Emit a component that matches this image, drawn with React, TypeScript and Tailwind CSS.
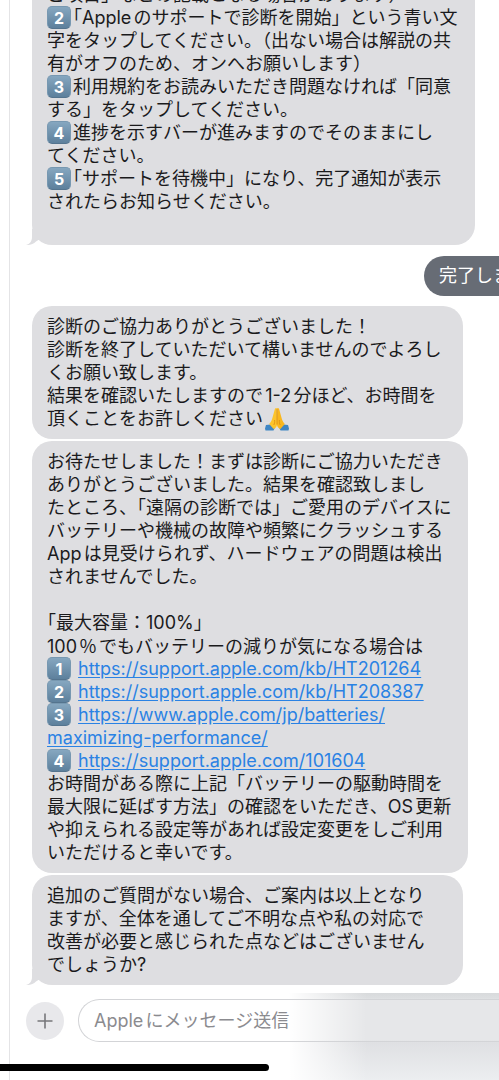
import type { ReactNode } from 'react'

const Key = ({ n }: { n: number }) => (
    <span className="inline-flex h-[23px] w-6 mr-0.5 items-center justify-center rounded-[5px] border border-[#7798b1] border-b-[#54748e] bg-linear-to-b from-[#86a7c0] to-[#5d809c] align-top font-[Inter,sans-serif] text-base font-bold text-white">
        {n}
    </span>
)

// half-width bracket, for places where a full-width one leaves too much room
const Half = ({ children }: { children: ReactNode }) => (
    <span className="[font-feature-settings:'halt']">{children}</span>
)

const Link = ({ href, children }: { href: string; children: ReactNode }) => (
    <a href={href} className="text-[#2a82e4] underline underline-offset-2">{children}</a>
)

const Pray = () => (
    <svg viewBox="0 0 24 24" className="ml-0.5 inline-block h-6 w-6 align-top" role="img" aria-label="お願い">
        <path d="M0 21.5 L1 18 L5.5 17.5 L10 20.5 L8.5 23.5 H.5 Z" fill="#3f86c4" />
        <path d="M24 21.5 L23 18 L18.5 17.5 L14 20.5 L15.5 23.5 H23.5 Z" fill="#3f86c4" />
        <path d="M11.8 1.2 C10.6 .6 9.9 1.6 9.6 3 L7.4 11 C6.9 13 6 15 4.2 17 L8.6 22 C10.6 21 12 19.5 12 17.5 Z" fill="#fcc42c" />
        <path d="M12.2 1.2 C13.4 .6 14.1 1.6 14.4 3 L16.6 11 C17.1 13 18 15 19.8 17 L15.4 22 C13.4 21 12 19.5 12 17.5 Z" fill="#f9b71e" />
        <path d="M12 2 V17.5 M9.6 13 C9.8 15 9.6 16.5 8.8 18 M14.4 13 C14.2 15 14.4 16.5 15.2 18" fill="none" stroke="#d98a12" strokeWidth=".8" />
    </svg>
)

const Tail = () => (
    <svg viewBox="0 0 14 16" className="absolute bottom-0 -left-1.5 h-4 w-3.5" aria-hidden="true">
        <path d="M6 0 V8 C6 12 4 15 0 16 C4 16.4 8 15 10 12.5 L14 10 V0 Z" fill="#dedee1" />
    </svg>
)

type BubbleProps = { lines: ReactNode[]; tail?: boolean; className: string }

const Bubble = ({ lines, tail, className }: BubbleProps) => (
    <div className={`relative rounded-[20px] bg-[#dedee1] py-[9px] pl-[15px] text-lg leading-[23px] whitespace-nowrap ${className}`}>
        {lines.map((line, i) => (
            <p key={i} className="h-[23px]">{line}</p>
        ))}
        {tail && <Tail />}
    </div>
)

const steps = [
    'ご項目」などの記載となる場合があります）',
    <><Key n={2} /><Half>「</Half>Appleのサポートで診断を開始」という青い文</>,
    '字をタップしてください。（出ない場合は解説の共',
    '有がオフのため、オンへお願いします）',
    <><Key n={3} />利用規約をお読みいただき問題なければ「同意</>,
    'する」をタップしてください。',
    <><Key n={4} />進捗を示すバーが進みますのでそのままにし</>,
    'てください。',
    <><Key n={5} /><Half>「</Half>サポートを待機中」になり、完了通知が表示</>,
    'されたらお知らせください。',
    '',
]

const thanks = [
    '診断のご協力ありがとうございました！',
    '診断を終了していただいて構いませんのでよろし',
    'くお願い致します。',
    '結果を確認いたしますので1-2分ほど、お時間を',
    <>頂くことをお許しください<Pray /></>,
]

const result = [
    'お待たせしました！まずは診断にご協力いただき',
    'ありがとうございました。結果を確認致しまし',
    'たところ、「遠隔の診断では」ご愛用のデバイスに',
    'バッテリーや機械の故障や頻繁にクラッシュする',
    'Appは見受けられず、ハードウェアの問題は検出',
    'されませんでした。',
    '',
    <><Half>「</Half>最大容量：100%<Half>」</Half></>,
    <>100<span className="mx-0.5 font-['Noto_Sans_CJK_JP',sans-serif]">％</span>でもバッテリーの減りが気になる場合は</>,
    <><Key n={1} /> <Link href="https://support.apple.com/kb/HT201264">https://support.apple.com/kb/HT201264</Link></>,
    <><Key n={2} /> <Link href="https://support.apple.com/kb/HT208387">https://support.apple.com/kb/HT208387</Link></>,
    <><Key n={3} /> <Link href="https://www.apple.com/jp/batteries/maximizing-performance/">https://www.apple.com/jp/batteries/</Link></>,
    <Link href="https://www.apple.com/jp/batteries/maximizing-performance/">maximizing-performance/</Link>,
    <><Key n={4} /> <Link href="https://support.apple.com/101604">https://support.apple.com/101604</Link></>,
    'お時間がある際に上記「バッテリーの駆動時間を',
    '最大限に延ばす方法」の確認をいただき、OS更新',
    'や抑えられる設定等があれば設定変更をしご利用',
    'いただけると幸いです。',
]

const closing = [
    '追加のご質問がない場合、ご案内は以上となり',
    'ますが、全体を通してご不明な点や私の対応で',
    '改善が必要と感じられた点などはございません',
    'でしょうか?',
]

const App = () => {
    return (
        <div lang="ja" className="overflow-hidden bg-white pl-[9px] font-[Inter,'Noto_Sans_CJK_JP',sans-serif] text-[#1a1a1c] [text-autospace:normal]">
            <div className="border-l border-[#e4e4e6]">
                <main className="flex flex-col pl-[22px]">
                    <Bubble lines={steps} tail className="-mt-[26px] mr-6" />
                    <div className="mt-[11px] -mr-[63px] mb-2.5 h-10 self-end rounded-full bg-[#676c75] px-[15px] text-lg leading-10 text-white">
                        完了しました
                    </div>
                    <div className="flex flex-col gap-0.5">
                        <Bubble lines={thanks} className="mr-9" />
                        <Bubble lines={result} className="mr-[31px]" />
                        <Bubble lines={closing} tail className="mr-9" />
                    </div>
                </main>
                <footer className="mt-2 bg-[linear-gradient(to_right,#fff_57%,transparent_73%),linear-gradient(to_bottom,#d8dadc_0%,#dddfe1_6%,#e6e7e9_8%,#e6e7e9_54%,#dfe0e3_57%,#eceef0_100%)]">
                    <form className="flex items-center gap-3.5 pt-1.5 pl-4">
                        <button type="button" aria-label="追加" className="flex size-[38px] shrink-0 items-center justify-center rounded-full bg-[#e8e8eb]">
                            <svg viewBox="0 0 16 16" className="size-4" fill="none" stroke="#77777b" strokeWidth="1.6">
                                <path d="M8 .5 V15.5 M.5 8 H15.5" />
                            </svg>
                        </button>
                        <input
                            type="text"
                            aria-label="メッセージ"
                            placeholder="Appleにメッセージ送信"
                            className="h-[43px] min-w-0 flex-1 rounded-l-full border border-r-0 border-[#d3d4d7] pl-[15px] text-lg placeholder:text-[#8b8b8f]"
                        />
                    </form>
                    <div className="-ml-2.5 pt-[22px] pb-[9px]">
                        <div className="h-[7px] w-[54%] rounded-r-full bg-black"></div>
                    </div>
                </footer>
            </div>
        </div>
    );
};

export default App;
